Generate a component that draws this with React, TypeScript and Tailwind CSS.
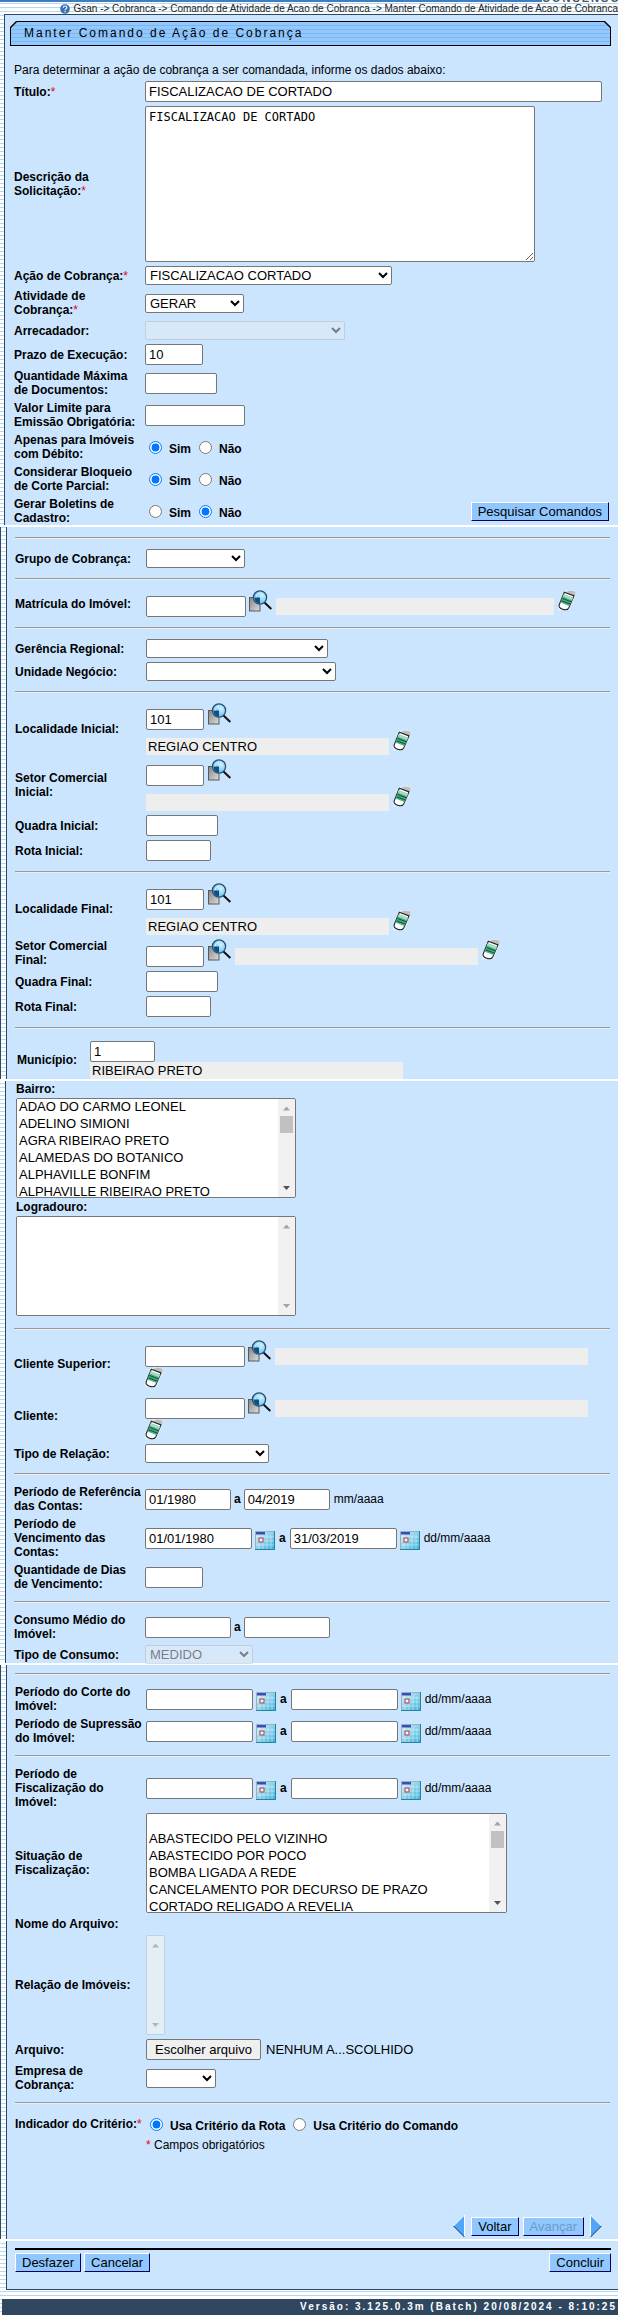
import { useState } from 'react';
import type { ReactNode } from 'react';

const BAIRROS = [
  'ADAO DO CARMO LEONEL',
  'ADELINO SIMIONI',
  'AGRA RIBEIRAO PRETO',
  'ALAMEDAS DO BOTANICO',
  'ALPHAVILLE BONFIM',
  'ALPHAVILLE RIBEIRAO PRETO',
];

const SITUACOES = [
  '',
  'ABASTECIDO PELO VIZINHO',
  'ABASTECIDO POR POCO',
  'BOMBA LIGADA A REDE',
  'CANCELAMENTO POR DECURSO DE PRAZO',
  'CORTADO RELIGADO A REVELIA',
];

function SearchIcon() {
  return (
    <svg className="block h-[22px] w-[23px]" viewBox="0 0 23 22">
      <defs>
        <linearGradient id="doc" x1="0" y1="0" x2="1" y2="1">
          <stop offset="0" stopColor="#858585" />
          <stop offset="1" stopColor="#dedede" />
        </linearGradient>
        <radialGradient id="lens" cx="0.65" cy="0.35" r="0.7">
          <stop offset="0" stopColor="#d2f2ff" />
          <stop offset="1" stopColor="#62bdf0" />
        </radialGradient>
      </defs>
      <rect x="0.5" y="7.5" width="10.500" height="13.500" fill="url(#doc)" stroke="#5a5a5a" />
      <path d="M15.500 12.500l6.800 6.500" stroke="#111" strokeWidth="2" />
      <circle cx="11" cy="7.500" r="6.600" fill="url(#lens)" stroke="#27506f" strokeWidth="1.300" />
      <path d="M5.500 7.500h5.500v6a5.800 5.800 0 0 1-5.500-6z" fill="#0d4f7e" />
      <path d="M7 7.500c0-2 1.500-4 4-4" fill="none" stroke="#fff" opacity="0.600" />
    </svg>
  );
}

function EraserIcon() {
  return (
    <svg className="block h-[21px] w-[18px]" viewBox="0 0 18 21">
      <path d="M0 20.500v-6L5.500 1.500 10 0l8 1v4l-6.500 14.500z" fill="#fff" opacity="0.500" />
      <path d="M7.500 2l4-1.500 6 1V5l-2 1.500z" fill="#bdbdbd" />
      <path
        d="M6.300 2.300l9.700 3.600-5 11.500c-1.200 2.600-3.700 2.800-6.300 1.900s-4.400-2.400-3.300-5z"
        fill="#fff"
        stroke="#222"
        strokeWidth="1.100"
      />
      <path d="M5.700 4.200l9.300 3.600-3.600 8.200-9-3.500z" fill="#4fae86" />
      <path d="M5.700 4.200l9.300 3.600-1 2.400-9.300-3.600z" fill="#a5dcc4" />
      <path d="M4.500 8.400l8.600 3.300M3.600 10.800l8.400 3.200" stroke="#0e5b3c" strokeWidth="1.100" />
    </svg>
  );
}

function CalendarIcon() {
  return (
    <svg className="block h-[19px] w-5" viewBox="0 0 20 19">
      <defs>
        <linearGradient id="cal" x1="0" y1="0" x2="1" y2="1">
          <stop offset="0.15" stopColor="#cbe6f2" />
          <stop offset="1" stopColor="#2fb0dc" />
        </linearGradient>
      </defs>
      <rect width="20" height="19" fill="url(#cal)" />
      <path d="M4 4v14M8 4v14M12 4v14M16 4v14M1 6h18M1 10h18M1 14h18" stroke="#fff" strokeWidth="0.700" opacity="0.600" />
      <path d="M0.500 19V.5H19" fill="none" stroke="#8fb4c6" />
      <path d="M19.500 0v18.500H0" fill="none" stroke="#2b7f9f" />
      <rect x="1" y="1" width="9" height="2.500" fill="#3c4cb0" />
      <rect x="4" y="7" width="4" height="4" fill="#f1f6fa" stroke="#a35a68" strokeWidth="1.200" />
    </svg>
  );
}

function IconButton({ label, children }: { label: string; children: ReactNode }) {
  return (
    <button type="button" aria-label={label} className="block shrink-0">
      {children}
    </button>
  );
}

function Row({
  label,
  htmlFor,
  required,
  children,
}: {
  label: ReactNode;
  htmlFor?: string;
  required?: boolean;
  children?: ReactNode;
}) {
  return (
    <div className="flex items-center py-[2px]">
      <label htmlFor={htmlFor} className="w-[129px] shrink-0 font-bold">
        {label}
        {required && <span className="font-normal text-red-600">*</span>}
      </label>
      <div className="ml-[2px] min-w-0 flex-1">{children}</div>
    </div>
  );
}

function TextField({
  id,
  label,
  value,
  width,
}: {
  id: string;
  label?: string;
  value?: string;
  width: string;
}) {
  return (
    <input
      id={id}
      type="text"
      aria-label={label}
      defaultValue={value}
      className={`block h-[21px] shrink-0 rounded-[2px] border border-[#767676] bg-white px-[3px] text-[13px] ${width}`}
    />
  );
}

function ReadOnlyField({ label, value, width }: { label: string; value?: string; width: string }) {
  return (
    <input
      type="text"
      readOnly
      aria-label={label}
      defaultValue={value}
      className={`block h-[17px] min-w-0 bg-[#eee] pl-[2px] text-[13px] leading-[17px] ${width}`}
    />
  );
}

function Select({
  id,
  value,
  width,
  disabled,
}: {
  id: string;
  value?: string;
  width: string;
  disabled?: boolean;
}) {
  return (
    <select
      id={id}
      disabled={disabled}
      className={`block h-[19px] rounded-[2px] border border-[#767676] bg-white text-[13px] disabled:border-[#76767650] disabled:bg-[#efefef80] disabled:text-[#545454] disabled:opacity-70 ${width}`}
    >
      <option>{value || ''}</option>
    </select>
  );
}

// Multi-line list with a classic scrollbar over its right edge
function ListBox({
  id,
  options,
  width,
  disabled,
}: {
  id: string;
  options: string[];
  width: string;
  disabled?: boolean;
}) {
  const scrollable = options.length > 0;
  return (
    <div
      className={`relative h-[100px] overflow-hidden rounded-[2px] border ${
        disabled ? 'border-[#76767640] opacity-70' : 'border-[#767676]'
      } ${width}`}
    >
      <select
        id={id}
        multiple
        disabled={disabled}
        className="block h-full w-full overflow-hidden bg-white p-0 text-[13px] leading-[17px] [scrollbar-width:none]"
      >
        {options.map((o) => (
          <option key={o} value={o} className="h-[17px] min-h-[17px] px-[2px] py-0">
            {o}
          </option>
        ))}
      </select>
      <svg className="absolute top-0 right-0 h-[98px] w-[17px] bg-[#f1f1f1]" viewBox="0 0 17 98">
        <path d="M5 11.500h7l-3.500-4z" fill="#a3a3a3" />
        {scrollable && <rect x="2" y="17" width="13" height="17" fill="#c1c1c1" />}
        <path d="M5 87h7l-3.500 4z" fill={scrollable ? '#505050' : '#a3a3a3'} />
      </svg>
    </div>
  );
}

function RadioPair({
  name,
  options,
  initial,
}: {
  name: string;
  options: [string, string];
  initial: string;
}) {
  const [selected, setSelected] = useState(initial);
  return (
    <div className="flex gap-2 pl-1">
      {options.map((o) => (
        <label key={o} className="flex items-center gap-[7px] font-bold">
          <input
            type="radio"
            name={name}
            checked={selected === o}
            onChange={() => setSelected(o)}
            className="h-[13px] w-[13px]"
          />
          <span className="pt-1">{o}</span>
        </label>
      ))}
    </div>
  );
}

function DateRange({ id, from, to }: { id: string; from?: string; to?: string }) {
  return (
    <div className="flex items-center">
      <TextField id={id} value={from} width="w-[107px]" />
      <div className="ml-[3px] pt-1">
        <IconButton label="Abrir calendário inicial">
          <CalendarIcon />
        </IconButton>
      </div>
      <span className="mx-1 font-bold">a</span>
      <TextField id={`${id}-fim`} label="Data final" value={to} width="w-[107px]" />
      <div className="mr-1 ml-[3px] pt-1">
        <IconButton label="Abrir calendário final">
          <CalendarIcon />
        </IconButton>
      </div>
      dd/mm/aaaa
    </div>
  );
}

function Localidade({ id, name, value, description }: { id: string; name: string; value?: string; description?: string }) {
  return (
    <div>
      <div className="flex h-[27px] items-start gap-1">
        <div className="self-end">
          <TextField id={id} value={value} width="w-[58px]" />
        </div>
        <IconButton label={`Pesquisar ${name}`}>
          <SearchIcon />
        </IconButton>
      </div>
      <div className="flex h-[25px] items-start gap-1">
        <div className="self-end">
          <ReadOnlyField label={name} value={description} width="w-[243px]" />
        </div>
        <IconButton label={`Limpar ${name}`}>
          <EraserIcon />
        </IconButton>
      </div>
    </div>
  );
}

function Cliente({ id, name }: { id: string; name: string }) {
  return (
    <div>
      <div className="flex h-[27px] items-end gap-[3px]">
        <TextField id={id} width="w-[100px]" />
        <div className="self-start">
          <IconButton label={`Pesquisar ${name}`}>
            <SearchIcon />
          </IconButton>
        </div>
        <div className="pb-[2px] pl-px">
          <ReadOnlyField label={name} width="w-[313px]" />
        </div>
      </div>
      <IconButton label={`Limpar ${name}`}>
        <EraserIcon />
      </IconButton>
    </div>
  );
}

function Separator() {
  return <hr className="my-2 h-[2px] border-t border-b border-t-[#9a9a9a] border-b-[#eee]" />;
}

function PageBreak() {
  return <div className="h-[2px] bg-white" />;
}

function Button({ children, disabled }: { children: ReactNode; disabled?: boolean }) {
  return (
    <button
      type="button"
      disabled={disabled}
      className="block h-[19px] border border-t-white border-r-[#00005a] border-b-[#00005a] border-l-white bg-[#90c7ff] px-1.5 text-[13px] leading-[17px] disabled:text-[#6f9bc8]"
    >
      {children}
    </button>
  );
}

const STRIPES = 'bg-[repeating-linear-gradient(#fff_0_3px,#b5d9ee_3px_4px)]';

export default function App() {
  return (
    <div
      className={`w-full overflow-hidden font-['Liberation_Sans',Arial,sans-serif] text-xs leading-[14px] text-black ${STRIPES}`}
    >
      {/* Bottom edge of the site banner */}
      <div className="flex h-[3px] items-end justify-end overflow-hidden border-b border-white bg-[#3f7cc0]">
        <div className="flex h-[3px] w-[76px] items-end bg-white text-[11px] leading-[8px] font-bold tracking-[2px] text-[#4a5560]">
          CONSENSO
        </div>
      </div>

      <nav className="flex h-[11px] items-center justify-end gap-[3px] text-[10px] leading-[11px] whitespace-nowrap text-[#222]">
        <svg className="h-[10px] w-[10px]" viewBox="0 0 10 10">
          <circle cx="5" cy="5" r="4.800" fill="#3a72b8" />
          <path d="M3.300 3.800c0-2.400 3.500-2.200 3.500-.2 0 1.300-1.700 1.200-1.700 2.600M5.100 7v1.200" fill="none" stroke="#fff" strokeWidth="1.100" />
        </svg>
        Gsan -&gt; Cobranca -&gt; Comando de Atividade de Acao de Cobranca -&gt; Manter Comando de Atividade de Acao de Cobranca
      </nav>

      <form>
        {/* Command data */}
        <div className="ml-1 border-t border-l border-[#2c4866] bg-[#cbe5ff] pr-2 pl-[9px]">
          <div className="mt-1.5 -mr-px -ml-1 bg-black p-px [clip-path:polygon(6px_0,calc(100%-6px)_0,100%_6px,100%_100%,0_100%,0_6px)]">
            <h1 className="h-[23px] bg-[repeating-linear-gradient(#90c8ff_0_3px,#7fb6ea_3px_4px)] pl-[13px] text-xs leading-[23px] tracking-[2px] [clip-path:polygon(6px_0,calc(100%-6px)_0,100%_6px,100%_100%,0_100%,0_6px)]">
              Manter Comando de Ação de Cobrança
            </h1>
          </div>

          <p className="mt-[15px] py-[2px]">
            Para determinar a ação de cobrança a ser comandada, informe os dados abaixo:
          </p>

          <Row label="Título:" htmlFor="titulo" required>
            <div className="pr-2">
              <TextField id="titulo" value="FISCALIZACAO DE CORTADO" width="w-full" />
            </div>
          </Row>
          <Row label="Descrição da Solicitação:" htmlFor="descricao" required>
            <textarea
              id="descricao"
              defaultValue="FISCALIZACAO DE CORTADO"
              className="block h-[156px] w-[390px] resize rounded-[2px] border border-[#767676] bg-white px-[3px] py-[3px] font-['DejaVu_Sans_Mono',monospace] text-xs leading-[15px]"
            />
          </Row>
          <Row label="Ação de Cobrança:" htmlFor="acao" required>
            <Select id="acao" value="FISCALIZACAO CORTADO" width="w-[247px]" />
          </Row>
          <Row label="Atividade de Cobrança:" htmlFor="atividade" required>
            <Select id="atividade" value="GERAR" width="w-[99px]" />
          </Row>
          <Row label="Arrecadador:" htmlFor="arrecadador">
            <Select id="arrecadador" width="w-[200px]" disabled />
          </Row>
          <Row label="Prazo de Execução:" htmlFor="prazo">
            <TextField id="prazo" value="10" width="w-[58px]" />
          </Row>
          <Row label="Quantidade Máxima de Documentos:" htmlFor="quantidade">
            <TextField id="quantidade" width="w-[72px]" />
          </Row>
          <Row label="Valor Limite para Emissão Obrigatória:" htmlFor="valor">
            <TextField id="valor" width="w-[100px]" />
          </Row>
          <Row label="Apenas para Imóveis com Débito:">
            <RadioPair name="debito" options={['Sim', 'Não']} initial="Sim" />
          </Row>
          <Row label="Considerar Bloqueio de Corte Parcial:">
            <RadioPair name="bloqueio" options={['Sim', 'Não']} initial="Sim" />
          </Row>
          <div className="h-[30px]">
            <Row label="Gerar Boletins de Cadastro:">
              <div className="flex items-center justify-between pr-px">
                <RadioPair name="boletins" options={['Sim', 'Não']} initial="Não" />
                <Button>Pesquisar Comandos</Button>
              </div>
            </Row>
          </div>
        </div>

        <PageBreak />

        {/* Location filters */}
        <div className="border-l border-[#2c4866]">
          <div className="ml-[5px] border-l border-[#2c4866] bg-[#cbe5ff] pt-[2px] pr-2 pl-2">
            <Separator />
            <Row label="Grupo de Cobrança:" htmlFor="grupo">
              <Select id="grupo" width="w-[99px]" />
            </Row>
            <Separator />
            <Row label="Matrícula do Imóvel:" htmlFor="matricula">
              <div className="flex h-[27px] items-end gap-[3px]">
                <TextField id="matricula" width="w-[100px]" />
                <div className="self-start">
                  <IconButton label="Pesquisar imóvel">
                    <SearchIcon />
                  </IconButton>
                </div>
                <div className="pb-[2px] pl-px">
                  <ReadOnlyField label="Imóvel" width="w-[278px]" />
                </div>
                <div className="self-start pl-px">
                  <IconButton label="Limpar imóvel">
                    <EraserIcon />
                  </IconButton>
                </div>
              </div>
            </Row>
            <Separator />
            <Row label="Gerência Regional:" htmlFor="gerencia">
              <Select id="gerencia" width="w-[182px]" />
            </Row>
            <Row label="Unidade Negócio:" htmlFor="unidade">
              <Select id="unidade" width="w-[190px]" />
            </Row>
            <Separator />
            <Row label="Localidade Inicial:" htmlFor="localidade-inicial">
              <Localidade id="localidade-inicial" name="localidade inicial" value="101" description="REGIAO CENTRO" />
            </Row>
            <Row label="Setor Comercial Inicial:" htmlFor="setor-inicial">
              <Localidade id="setor-inicial" name="setor comercial inicial" />
            </Row>
            <Row label="Quadra Inicial:" htmlFor="quadra-inicial">
              <TextField id="quadra-inicial" width="w-[72px]" />
            </Row>
            <Row label="Rota Inicial:" htmlFor="rota-inicial">
              <TextField id="rota-inicial" width="w-[65px]" />
            </Row>
            <Separator />
            <Row label="Localidade Final:" htmlFor="localidade-final">
              <Localidade id="localidade-final" name="localidade final" value="101" description="REGIAO CENTRO" />
            </Row>
            <Row
              label={
                <>
                  Setor Comercial
                  <br />
                  Final:
                </>
              }
              htmlFor="setor-final"
            >
              <div className="flex h-7 items-end gap-1">
                <TextField id="setor-final" width="w-[58px]" />
                <div className="self-start">
                  <IconButton label="Pesquisar setor comercial final">
                    <SearchIcon />
                  </IconButton>
                </div>
                <div className="pb-[2px]">
                  <ReadOnlyField label="Setor comercial final" width="w-[243px]" />
                </div>
                <div className="self-start">
                  <IconButton label="Limpar setor comercial final">
                    <EraserIcon />
                  </IconButton>
                </div>
              </div>
            </Row>
            <Row label="Quadra Final:" htmlFor="quadra-final">
              <TextField id="quadra-final" width="w-[72px]" />
            </Row>
            <Row label="Rota Final:" htmlFor="rota-final">
              <TextField id="rota-final" width="w-[65px]" />
            </Row>
            <Separator />
            <div className="flex items-center pt-1 pl-[2px]">
              <label htmlFor="municipio" className="w-[73px] font-bold">
                Município:
              </label>
              <div>
                <TextField id="municipio" value="1" width="w-[65px]" />
                <ReadOnlyField label="Nome do município" value="RIBEIRAO PRETO" width="w-[313px]" />
              </div>
            </div>
          </div>
        </div>

        <PageBreak />

        {/* Address, client and consumption filters */}
        <div className="ml-[5px] border-l border-[#2c4866] bg-[#cbe5ff] pr-2 pl-2">
          <div className="pt-px pl-[2px]">
            <label htmlFor="bairro" className="block pb-[2px] font-bold">
              Bairro:
            </label>
            <ListBox id="bairro" options={BAIRROS} width="w-[280px]" />
            <label htmlFor="logradouro" className="block py-[2px] font-bold">
              Logradouro:
            </label>
            <ListBox id="logradouro" options={[]} width="w-[280px]" />
          </div>
          <div className="pt-1">
            <Separator />
          </div>
          <Row label="Cliente Superior:" htmlFor="cliente-superior">
            <Cliente id="cliente-superior" name="cliente superior" />
          </Row>
          <Row label="Cliente:" htmlFor="cliente">
            <Cliente id="cliente" name="cliente" />
          </Row>
          <Row label="Tipo de Relação:" htmlFor="relacao">
            <Select id="relacao" width="w-[124px]" />
          </Row>
          <Separator />
          <Row label="Período de Referência das Contas:" htmlFor="referencia">
            <div className="flex items-center">
              <TextField id="referencia" value="01/1980" width="w-[86px]" />
              <span className="mx-[3px] font-bold">a</span>
              <TextField id="referencia-fim" label="Referência final" value="04/2019" width="w-[86px]" />
              <span className="ml-1">mm/aaaa</span>
            </div>
          </Row>
          <Row label="Período de Vencimento das Contas:" htmlFor="vencimento">
            <DateRange id="vencimento" from="01/01/1980" to="31/03/2019" />
          </Row>
          <Row label="Quantidade de Dias de Vencimento:" htmlFor="dias">
            <TextField id="dias" width="w-[58px]" />
          </Row>
          <Separator />
          <Row label="Consumo Médio do Imóvel:" htmlFor="consumo">
            <div className="flex items-center">
              <TextField id="consumo" width="w-[86px]" />
              <span className="mx-[3px] font-bold">a</span>
              <TextField id="consumo-fim" label="Consumo final" width="w-[86px]" />
            </div>
          </Row>
          <div className="h-5">
            <Row label="Tipo de Consumo:" htmlFor="tipo-consumo">
              <Select id="tipo-consumo" value="MEDIDO" width="w-[108px]" disabled />
            </Row>
          </div>
        </div>

        <PageBreak />

        {/* Inspection data and criteria */}
        <div className="border-l border-[#2c4866]">
          <div className="ml-[5px] flow-root border-l border-[#2c4866] bg-[#cbe5ff] pr-2 pb-[2px] pl-2">
            <Separator />
            <Row label="Período do Corte do Imóvel:" htmlFor="corte">
              <DateRange id="corte" />
            </Row>
            <Row label="Período de Supressão do Imóvel:" htmlFor="supressao">
              <DateRange id="supressao" />
            </Row>
            <Separator />
            <Row label="Período de Fiscalização do Imóvel:" htmlFor="fiscalizacao">
              <DateRange id="fiscalizacao" />
            </Row>
            <Row label="Situação de Fiscalização:" htmlFor="situacao">
              <ListBox id="situacao" options={SITUACOES} width="w-[361px]" />
            </Row>
            <Row label="Nome do Arquivo:" />
            <Row label="Relação de Imóveis:" htmlFor="imoveis">
              <ListBox id="imoveis" options={[]} width="w-[19px]" disabled />
            </Row>
            <Row label="Arquivo:" htmlFor="arquivo">
              <div className="flex items-center gap-[5px] text-[13px]">
                <button
                  id="arquivo"
                  type="button"
                  className="h-[21px] w-[115px] rounded-[2px] border border-[#767676] bg-[#efefef] text-[13px]"
                >
                  Escolher arquivo
                </button>
                NENHUM A...SCOLHIDO
              </div>
            </Row>
            <Row label="Empresa de Cobrança:" htmlFor="empresa">
              <Select id="empresa" width="w-[70px]" />
            </Row>
            <Separator />
            <div className="py-px">
              <Row label="Indicador do Critério:" required>
                <RadioPair
                  name="criterio"
                  options={['Usa Critério da Rota', 'Usa Critério do Comando']}
                  initial="Usa Critério da Rota"
                />
              </Row>
            </div>
            <p className="py-[2px] pl-[131px]">
              <span className="text-red-600">*</span> Campos obrigatórios
            </p>

            <div className="flex items-center justify-end gap-1 pt-[61px] pr-2">
              <svg className="mr-[2px] h-[22px] w-3" viewBox="0 0 12 22">
                <path d="M11.500 0v22L0.500 11z" fill="#50a6fb" />
                <path d="M0.500 11L11.500 0v22" fill="none" stroke="#fff" />
                <path d="M0.500 11l11 11" stroke="#16344f" />
              </svg>
              <Button>Voltar</Button>
              <Button disabled>Avançar</Button>
              <svg className="ml-[2px] h-[22px] w-3" viewBox="0 0 12 22">
                <path d="M0.500 0v22l11-11z" fill="#50a6fb" />
                <path d="M0.500 22V0l11 11" fill="none" stroke="#fff" />
                <path d="M0.500 22l11-11" stroke="#16344f" />
              </svg>
            </div>
          </div>
        </div>

        <PageBreak />

        <div className="ml-1.5 border-b border-l border-[#2c4866] bg-[#cbe5ff] pt-[7px] pr-[7px] pb-[17px] pl-2">
          <div className="flex justify-between border-t-2 border-black pt-[3px]">
            <div className="flex gap-[3px]">
              <Button>Desfazer</Button>
              <Button>Cancelar</Button>
            </div>
            <Button>Concluir</Button>
          </div>
        </div>
      </form>

      <footer className="mt-[9px] ml-[2px] h-4 bg-[#30485f] pr-px text-right text-[10px] leading-4 font-bold tracking-[2px] text-white">
        Versão: 3.125.0.3m (Batch) 20/08/2024 - 8:10:25
      </footer>
    </div>
  );
}
